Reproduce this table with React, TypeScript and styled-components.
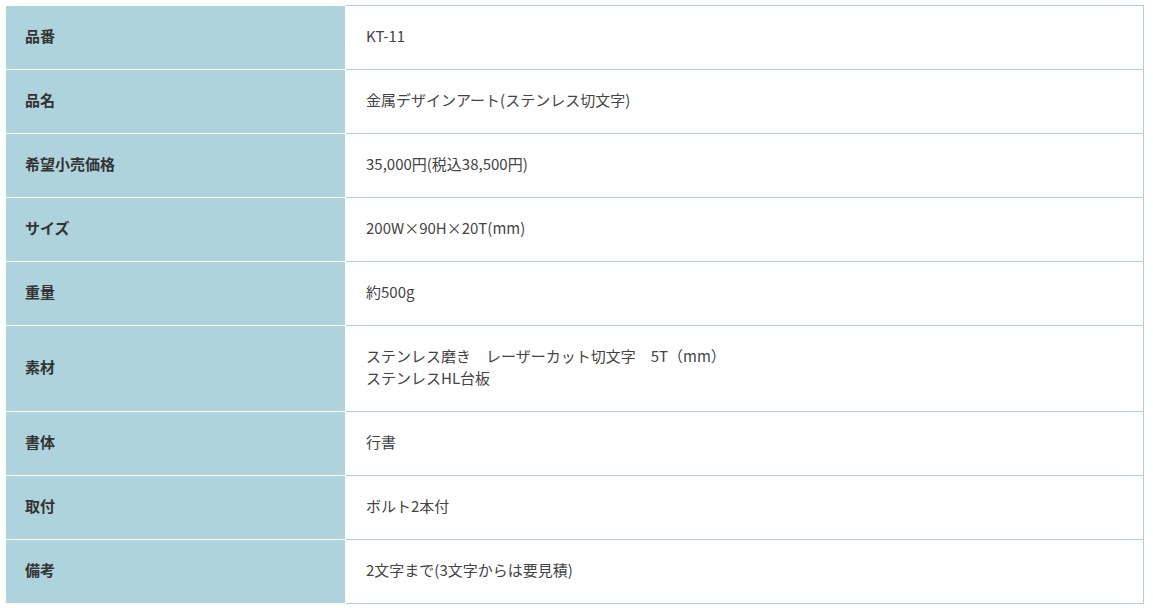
import React from "react";
import styled, { createGlobalStyle } from "styled-components";

const Global = createGlobalStyle`
  html, body { margin: 0; padding: 0; background: #ffffff; }
  body { font-family: "Noto Sans CJK JP", "Noto Sans", sans-serif; }
`;

const Table = styled.table`
  margin: 5px 0 0 5px;
  width: 1139px;
  border-collapse: collapse;
  table-layout: fixed;
  font-size: 15px;
  line-height: 22px;
`;

const Head = styled.th`
  width: 340px;
  box-sizing: border-box;
  background: #afd3dc;
  border: 1px solid #ffffff;
  color: #333333;
  font-weight: 700;
  text-align: left;
  padding: 19px 20px 22px 19px;
  vertical-align: middle;
`;

const Cell = styled.td`
  border-top: 1px solid #a9d1db;
  border-bottom: 1px solid #a9d1db;
  border-right: 1px solid #a9d1db;
  border-left: 1px solid #ffffff;
  color: #444444;
  font-weight: 400;
  padding: 19px 20px 22px 20px;
  vertical-align: middle;
`;

const rows: [string, React.ReactNode][] = [
  ["品番", "KT-11"],
  ["品名", "金属デザインアート(ステンレス切文字)"],
  ["希望小売価格", "35,000円(税込38,500円)"],
  ["サイズ", "200W×90H×20T(mm)"],
  ["重量", "約500g"],
  [
    "素材",
    <>
      ステンレス磨き　レーザーカット切文字　5T（mm）
      <br />
      ステンレスHL台板
    </>,
  ],
  ["書体", "行書"],
  ["取付", "ボルト2本付"],
  ["備考", "2文字まで(3文字からは要見積)"],
];

export default function App() {
  return (
    <>
      <Global />
      <Table>
        <tbody>
          {rows.map(([k, v]) => (
            <tr key={k}>
              <Head>{k}</Head>
              <Cell>{v}</Cell>
            </tr>
          ))}
        </tbody>
      </Table>
    </>
  );
}
